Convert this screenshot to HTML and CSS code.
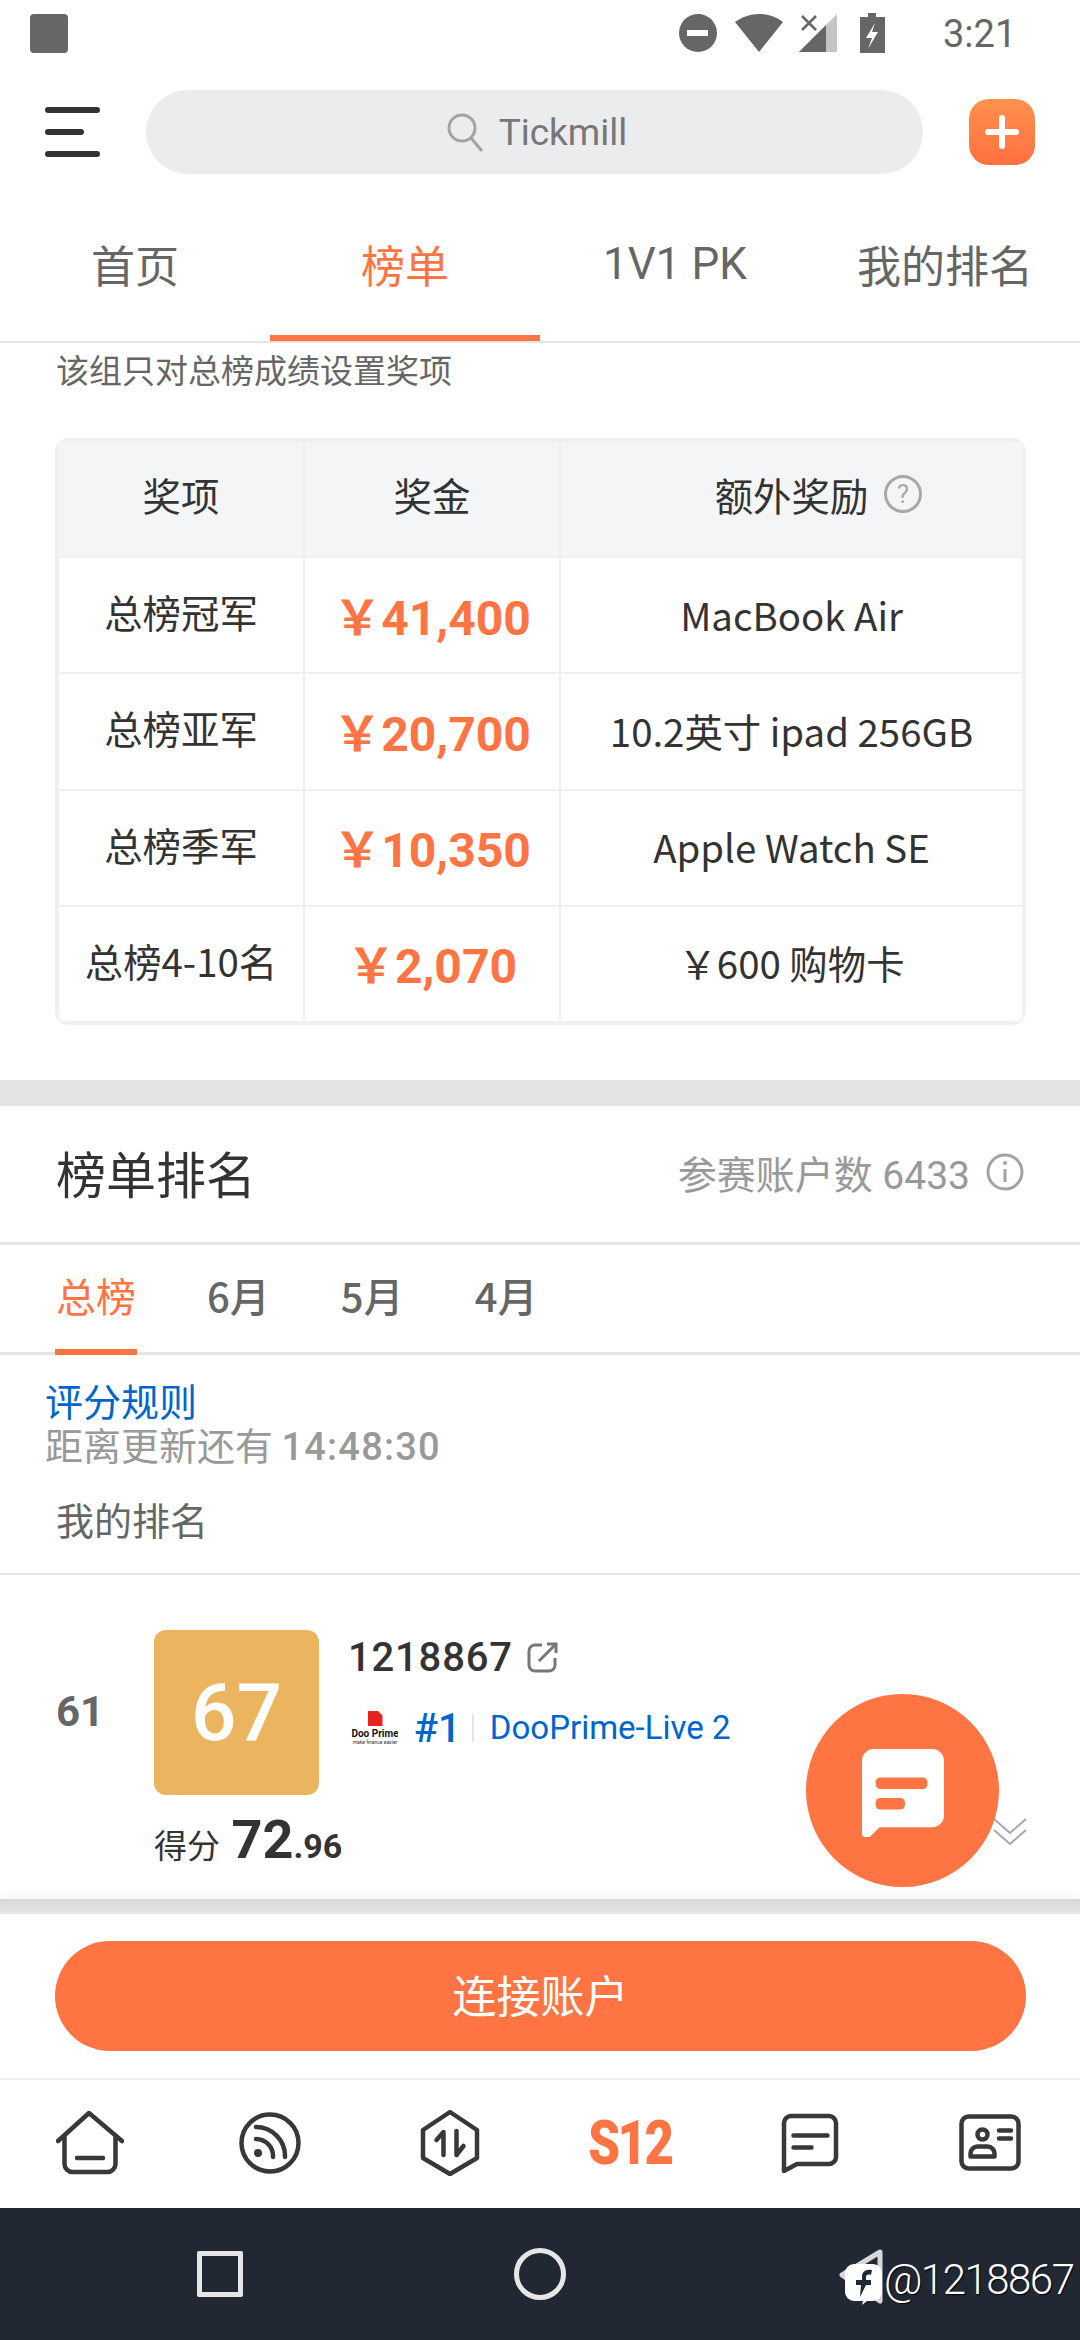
FILE: index.html
```html
<!DOCTYPE html>
<html lang="en">

<head>
    <meta charset="UTF-8">
    <meta name="viewport" content="width=device-width, initial-scale=1.0">
    <title>榜单</title>
    <link rel="stylesheet" href="styles.css">
</head>

<body>
    <div class="page">
        <div class="status-bar">
            <div class="status-square"></div>
            <svg class="status-icons" width="210" height="40" viewBox="0 0 210 40">
                <circle cx="20" cy="20" r="19" fill="#666" />
                <rect x="9" y="17" width="21" height="6" fill="#fff" />
                <path d="M81 1c9 0 17 3 24 8L81 39 57 9c7-5 15-8 24-8z" fill="#666" />
                <path d="M159 1v38h-38z" fill="#c4c4c4" />
                <path d="M148 12l-27 27h27z" fill="#666" />
                <path d="M124 3l14 14M138 3l-14 14" stroke="#666" stroke-width="2.500" />
                <path d="M190 0h8v4h9v36h-25V4h8z" fill="#666" />
                <path d="M197 10l-9 15h6l-4 11 10-17h-6z" fill="#fff" />
            </svg>
            <div class="status-time">3:21</div>
        </div>

        <div class="top-bar">
            <div class="menu-btn">
                <span class="menu-line"></span>
                <span class="menu-line short"></span>
                <span class="menu-line"></span>
            </div>
            <div class="search-box">
                <svg width="40" height="40" viewBox="0 0 40 40">
                    <circle cx="16" cy="16" r="13" fill="none" stroke="#a3a3a3" stroke-width="3" />
                    <path d="M25 26l11 13" stroke="#a3a3a3" stroke-width="3" />
                </svg>
                <span>Tickmill</span>
            </div>
            <div class="add-btn">
                <svg width="34" height="34" viewBox="0 0 34 34">
                    <path d="M17 3v28M3 17h28" stroke="#fff" stroke-width="6" stroke-linecap="round" />
                </svg>
            </div>
        </div>

        <div class="main-tabs">
            <div class="main-tab">首页</div>
            <div class="main-tab active">榜单</div>
            <div class="main-tab">1V1 PK</div>
            <div class="main-tab">我的排名</div>
        </div>

        <div class="content">
            <p class="prize-note">该组只对总榜成绩设置奖项</p>

            <div class="prize-frame">
                <table class="prize-table">
                    <tr>
                        <th class="col-name">奖项</th>
                        <th class="col-money">奖金</th>
                        <th>
                            <span class="extra-head">额外奖励
                                <svg width="40" height="40" viewBox="0 0 40 40">
                                    <circle cx="20" cy="20" r="17.500" fill="none" stroke="#a8a8a8" stroke-width="3" />
                                    <text x="20" y="29" class="help-mark">?</text>
                                </svg>
                            </span>
                        </th>
                    </tr>
                    <tr>
                        <td class="prize-name">总榜冠军</td>
                        <td class="prize-money">￥41,400</td>
                        <td>MacBook Air</td>
                    </tr>
                    <tr>
                        <td class="prize-name">总榜亚军</td>
                        <td class="prize-money">￥20,700</td>
                        <td>10.2英寸 ipad 256GB</td>
                    </tr>
                    <tr>
                        <td class="prize-name">总榜季军</td>
                        <td class="prize-money">￥10,350</td>
                        <td>Apple Watch SE</td>
                    </tr>
                    <tr>
                        <td class="prize-name">总榜4-10名</td>
                        <td class="prize-money">￥2,070</td>
                        <td>￥600 购物卡</td>
                    </tr>
                </table>
            </div>

            <div class="band"></div>

            <div class="rank-head">
                <h2>榜单排名</h2>
                <div class="rank-count">
                    <span>参赛账户数 6433</span>
                    <svg width="38" height="38" viewBox="0 0 38 38">
                        <circle cx="19" cy="19" r="17" fill="none" stroke="#a3a3a3" stroke-width="3" />
                        <path d="M19 16v13" stroke="#a3a3a3" stroke-width="3" />
                        <circle cx="19" cy="10" r="2" fill="#a3a3a3" />
                    </svg>
                </div>
            </div>

            <div class="sub-tabs">
                <div class="sub-tab active">总榜</div>
                <div class="sub-tab">6月</div>
                <div class="sub-tab">5月</div>
                <div class="sub-tab">4月</div>
            </div>

            <div class="rule-link">评分规则</div>
            <div class="countdown">距离更新还有 <span class="countdown-time">14:48:30</span></div>
            <div class="my-rank">我的排名</div>

            <div class="rank-row">
                <div class="rank-no">61</div>
                <div class="rank-tile">67</div>
                <div class="rank-info">
                    <div class="acct-line">
                        <span class="acct-no">1218867</span>
                        <svg width="32" height="32" viewBox="0 0 32 32">
                            <path d="M15 4H8a6 6 0 0 0-6 6v14a6 6 0 0 0 6 6h14a6 6 0 0 0 6-6v-7" fill="none" stroke="#777" stroke-width="3" />
                            <path d="M12 20L29 3M20 3h9v9" fill="none" stroke="#777" stroke-width="3" />
                        </svg>
                    </div>
                    <div class="broker-line">
                        <div class="broker-logo">
                            <span class="logo-mark"></span>
                            <span class="logo-name">Doo Prime</span>
                            <span class="logo-tag">make finance easier</span>
                        </div>
                        <span class="broker-rank">#1</span>
                        <span class="broker-name">DooPrime-Live 2</span>
                    </div>
                </div>
                <div class="rank-score">得分 <b class="score-big">72</b><b>.96</b></div>
                <svg class="rank-more" width="34" height="28" viewBox="0 0 34 28">
                    <path d="M1 2l16 14L33 2M1 13l16 14 16-14" fill="none" stroke="#a8a8a8" stroke-width="2" />
                </svg>
            </div>
        </div>

        <div class="footer">
            <div class="footer-shade"></div>
            <div class="connect-bar">
                <div class="connect-btn">连接账户</div>
            </div>
            <div class="bottom-nav">
                <div class="nav-item">
                    <svg width="68" height="64" viewBox="0 0 68 64" class="nav-icon">
                        <path d="M2 30L33 2l33 28" />
                        <path d="M8.500 25v28a8 8 0 0 0 8 8h35a8 8 0 0 0 8-8V25" />
                        <path d="M21 47h26" />
                    </svg>
                </div>
                <div class="nav-item">
                    <svg width="64" height="64" viewBox="0 0 64 64" class="nav-icon">
                        <circle cx="32" cy="32" r="28.500" />
                        <path d="M18 16a29 29 0 0 1 29 30" />
                        <path d="M18 28a17 17 0 0 1 17 18" />
                        <circle cx="20" cy="42" r="4" class="nav-dot" />
                    </svg>
                </div>
                <div class="nav-item">
                    <svg width="60" height="66" viewBox="0 0 60 66" class="nav-icon">
                        <path d="M30 2l27 18v28L30 64 3 48V20z" />
                        <path d="M23.500 45V22l-7 8" />
                        <path d="M36.500 21v24l7-9" />
                    </svg>
                </div>
                <div class="nav-item">
                    <span class="s12-logo">S12</span>
                </div>
                <div class="nav-item">
                    <svg width="58" height="60" viewBox="0 0 58 60" class="nav-icon">
                        <path d="M10 3h38a7 7 0 0 1 7 7v34a7 7 0 0 1-7 7H16L3 58V10a7 7 0 0 1 7-7z" />
                        <path d="M12.500 22.500h34M12.500 34.500h18" />
                    </svg>
                </div>
                <div class="nav-item">
                    <svg width="62" height="58" viewBox="0 0 62 58" class="nav-icon">
                        <rect x="2.500" y="2.500" width="57" height="52" rx="7" />
                        <circle cx="23.500" cy="20.500" r="5" />
                        <path d="M11.500 42.500v-3a7 7 0 0 1 7-7h10a7 7 0 0 1 7 7v3z" />
                        <path d="M40 16.500h12M40 24.500h12" />
                    </svg>
                </div>
            </div>
        </div>

        <div class="sys-nav">
            <div class="sys-square"></div>
            <div class="sys-circle"></div>
            <div class="sys-spacer"></div>
        </div>

        <div class="chat-fab">
            <svg width="82" height="88" viewBox="0 0 84 90">
                <path d="M12 0h60a12 12 0 0 1 12 12v56a12 12 0 0 1-12 12H18L9 89a5 5 0 0 1-9-2V12A12 12 0 0 1 12 0z" fill="#fff" />
                <rect x="14" y="29" width="53" height="12" rx="5" fill="#ff7443" />
                <rect x="14" y="50" width="30" height="12" rx="5" fill="#ff7443" />
            </svg>
        </div>

        <div class="watermark">
            <svg width="46" height="56" viewBox="0 0 46 56">
                <path d="M42 3L4 26l38 26z" fill="none" stroke="#d8d8d8" stroke-width="5" stroke-linejoin="round" />
                <path d="M16 15h19a9 9 0 0 1 9 9v19a9 9 0 0 1-9 9h-6l-5 4 1-4h-9a9 9 0 0 1-9-9V24a9 9 0 0 1 9-9z" fill="#fff" />
                <path d="M34 21c-7-1-10 2-10 7v3h-6v5h5l-1 12 6-12h5v-5h-5v-3c0-2 2-3 5-2z" fill="#222833" />
            </svg>
            <span>@1218867</span>
        </div>
    </div>
</body>

</html>
```

FILE: styles.css
```css
* {
    box-sizing: border-box;
}

body,
html {
    margin: 0;
    padding: 0;
    width: 1080px;
    height: 2340px;
    overflow: hidden;
    background-color: #fff;
    font-family: Roboto, "Noto Sans CJK SC", sans-serif;
}

.page {
    position: relative;
    display: flex;
    flex-direction: column;
    width: 1080px;
    height: 2340px;
}

/* status bar */
.status-bar {
    display: flex;
    align-items: flex-start;
    height: 80px;
    padding: 13px 64px 0 30px;
}

.status-square {
    width: 38px;
    height: 39px;
    margin-top: 1px;
    border-radius: 4px;
    background-color: #666;
}

.status-icons {
    margin-left: auto;
}

.status-time {
    width: 73px;
    margin-left: 55px;
    font-size: 38px;
    line-height: 42px;
    color: #666;
}

/* search row */
.top-bar {
    display: flex;
    align-items: center;
    gap: 46px;
    height: 110px;
    padding: 0 45px 6px;
}

.menu-btn {
    display: flex;
    flex-direction: column;
    gap: 16px;
    width: 55px;
}

.menu-line {
    width: 55px;
    height: 6px;
    border-radius: 3px;
    background-color: #333;
}

.menu-line.short {
    width: 39px;
}

.search-box {
    display: flex;
    flex: 1;
    align-items: center;
    justify-content: center;
    gap: 13px;
    height: 84px;
    padding-left: 4px;
    border-radius: 42px;
    background-color: #ebecee;
    font-size: 37px;
    color: #777;
}

.add-btn {
    display: flex;
    align-items: center;
    justify-content: center;
    width: 66px;
    height: 66px;
    border-radius: 20px;
    background: linear-gradient(#ff914d, #ff7040);
}

/* main tabs */
.main-tabs {
    display: flex;
    height: 153px;
    border-bottom: 2px solid #e5e5e5;
}

.main-tab {
    display: flex;
    align-items: center;
    justify-content: center;
    width: 270px;
    height: 151px;
    padding-top: 2px;
    font-size: 44px;
    color: #666;
    border-bottom: 6px solid transparent;
}

.main-tab.active {
    color: #ff7443;
    border-bottom-color: #ff7443;
}

/* scrolled content */
.content {
    flex: 1;
    overflow: hidden;
    font-family: "Noto Sans CJK SC", sans-serif;
}

.prize-note {
    height: 95px;
    margin: 0;
    padding: 0 56px;
    font-size: 33px;
    line-height: 52px;
    color: #666;
}

.prize-frame {
    width: 971px;
    height: 587px;
    margin-left: 55px;
    overflow: hidden;
    border: 2px solid #f0f0f0;
    border-radius: 14px;
}

.prize-table {
    width: 100%;
    height: 100%;
    table-layout: fixed;
    border-collapse: collapse;
    font-size: 38.400px;
    color: #333;
    text-align: center;
    white-space: nowrap;
}

.prize-table th,
.prize-table td {
    padding: 0 0 3px;
    border: 2px solid #f0f0f0;
}

.prize-table th {
    height: 116px;
    padding-bottom: 10px;
    font-weight: 400;
    background-color: #f4f5f7;
}

.col-name {
    width: 246px;
}

.col-money {
    width: 256px;
}

.prize-table .prize-name {
    padding-bottom: 8px;
}

.prize-money {
    font-family: Roboto, "Noto Sans CJK SC", sans-serif;
    font-size: 48px;
    font-weight: 700;
    color: #ff7443;
}

.extra-head {
    display: inline-flex;
    align-items: center;
    gap: 15px;
    padding-left: 55px;
}

.help-mark {
    font-family: Roboto, sans-serif;
    font-size: 26px;
    fill: #a8a8a8;
    text-anchor: middle;
}

.band {
    height: 26px;
    margin-top: 55px;
    background-color: #e3e3e3;
}

.rank-head {
    display: flex;
    align-items: center;
    justify-content: space-between;
    height: 139px;
    padding: 0 56px 4px;
    border-bottom: 3px solid #e5e5e5;
}

.rank-head h2 {
    margin: 0;
    font-size: 50px;
    font-weight: 400;
    color: #333;
}

.rank-count {
    display: flex;
    align-items: center;
    gap: 16px;
    font-family: Roboto, "Noto Sans CJK SC", sans-serif;
    font-size: 39px;
    color: #999;
}

.sub-tabs {
    display: flex;
    gap: 69px;
    height: 110px;
    padding: 0 55px;
    border-bottom: 3px solid #e5e5e5;
}

.sub-tab {
    height: 110px;
    padding: 0 1px;
    font-size: 40px;
    font-weight: 500;
    line-height: 100px;
    color: #666;
    border-bottom: 6px solid transparent;
}

.sub-tab.active {
    font-weight: 400;
    color: #ff7443;
    border-bottom-color: #ff7443;
}

.rule-link {
    height: 44px;
    margin-top: 23px;
    padding-left: 45px;
    font-size: 38px;
    line-height: 44px;
    color: #0066cc;
}

.countdown {
    height: 46px;
    padding-left: 45px;
    font-size: 38px;
    line-height: 44px;
    color: #999;
}

.countdown-time {
    font-family: Roboto, sans-serif;
    font-size: 38px;
    font-weight: 500;
    letter-spacing: 1.200px;
}

.my-rank {
    height: 107px;
    padding: 22px 56px 0;
    font-size: 38px;
    line-height: 58px;
    color: #666;
    border-bottom: 2px solid #e5e5e5;
}

/* my rank row */
.rank-row {
    position: relative;
    display: grid;
    grid-template-columns: 98px 165px 1fr;
    grid-template-rows: 165px auto;
    height: 324px;
    padding: 55px 0 0 56px;
    overflow: hidden;
}

.rank-no {
    align-self: center;
    padding-bottom: 3px;
    font-family: Roboto, sans-serif;
    font-size: 42px;
    font-weight: 700;
    color: #666;
}

.rank-tile {
    display: flex;
    align-items: center;
    justify-content: center;
    width: 165px;
    height: 165px;
    border-radius: 12px;
    background-color: #ebb55f;
    font-family: Roboto, sans-serif;
    font-size: 80px;
    font-weight: 500;
    color: #fff;
}

.rank-info {
    padding-left: 29px;
}

.acct-line {
    display: flex;
    align-items: center;
    gap: 14px;
    height: 54px;
}

.acct-no {
    font-family: Roboto, sans-serif;
    font-size: 40px;
    font-weight: 500;
    letter-spacing: 0.800px;
    color: #333;
}

.broker-line {
    display: flex;
    align-items: center;
    height: 50px;
    margin-top: 19px;
    padding-left: 4px;
    font-family: Roboto, sans-serif;
    color: #0066cc;
}

.broker-logo {
    display: flex;
    flex-direction: column;
    align-items: center;
    width: 46px;
    overflow: hidden;
    white-space: nowrap;
}

.logo-mark {
    width: 15px;
    height: 15px;
    background-color: #e8231f;
    clip-path: polygon(0 0, 70% 0, 100% 30%, 100% 100%, 0 100%);
}

.logo-name {
    margin-top: 2px;
    font-size: 10px;
    font-weight: 700;
    line-height: 11px;
    color: #111;
}

.logo-tag {
    font-size: 5px;
    line-height: 6px;
    color: #333;
}

.broker-rank {
    margin-left: 16px;
    padding-right: 11px;
    font-size: 40px;
    font-weight: 500;
}

.broker-name {
    height: 28px;
    padding-left: 16px;
    font-size: 33px;
    line-height: 28px;
    border-left: 2px solid #e5e5e5;
}

.rank-score {
    grid-column: 2 / 4;
    margin-top: 15px;
    font-size: 33px;
    line-height: 60px;
    color: #333;
}

.rank-score b {
    font-family: Roboto, sans-serif;
    font-size: 34px;
    font-weight: 700;
}

.rank-score .score-big {
    margin-left: 4px;
    font-size: 54px;
}

.rank-more {
    position: absolute;
    top: 242px;
    left: 993px;
}

/* footer */
.footer-shade {
    height: 15px;
    background: linear-gradient(#d8d8d8, #e6e6e6);
    box-shadow: 0 -6px 8px rgba(0, 0, 0, 0.03);
}

.connect-bar {
    height: 164px;
    padding: 27px 54px 27px 55px;
}

.connect-btn {
    height: 110px;
    border-radius: 55px;
    background-color: #ff7443;
    font-family: "Noto Sans CJK SC", sans-serif;
    font-size: 44px;
    line-height: 106px;
    color: #fff;
    text-align: center;
}

.bottom-nav {
    display: grid;
    grid-template-columns: repeat(6, 180px);
    height: 130px;
    border-top: 2px solid #f0f0f0;
}

.nav-item {
    display: flex;
    align-items: center;
    justify-content: center;
    padding-bottom: 2px;
}

.nav-icon {
    fill: none;
    stroke: #383838;
    stroke-width: 4.500;
    stroke-linecap: round;
    stroke-linejoin: round;
}

.nav-dot {
    fill: #383838;
    stroke: none;
}

.s12-logo {
    font-family: Roboto, sans-serif;
    font-size: 62px;
    font-weight: 900;
    letter-spacing: -3px;
    line-height: 62px;
    color: #ff7443;
    transform: scaleX(0.82);
}

.sys-nav {
    display: grid;
    grid-template-columns: 440px 200px 440px;
    align-items: center;
    justify-items: center;
    height: 132px;
    background-color: #222833;
}

.sys-square {
    width: 46px;
    height: 46px;
    border: 5px solid #e6e6e6;
    border-radius: 2px;
}

.sys-circle {
    width: 52px;
    height: 52px;
    border: 5px solid #e6e6e6;
    border-radius: 50%;
}

.chat-fab {
    position: absolute;
    top: 1694px;
    left: 806px;
    display: flex;
    align-items: center;
    justify-content: center;
    width: 193px;
    height: 193px;
    padding-top: 4px;
    border-radius: 50%;
    background-color: #ff7443;
}

.watermark {
    position: absolute;
    top: 2249px;
    left: 838px;
    display: flex;
    align-items: flex-end;
    font-family: Roboto, sans-serif;
    font-size: 42px;
    font-weight: 300;
    letter-spacing: -1.500px;
    line-height: 50px;
    color: #fff;
    text-shadow: 1px 1px 1px #000;
}
```
